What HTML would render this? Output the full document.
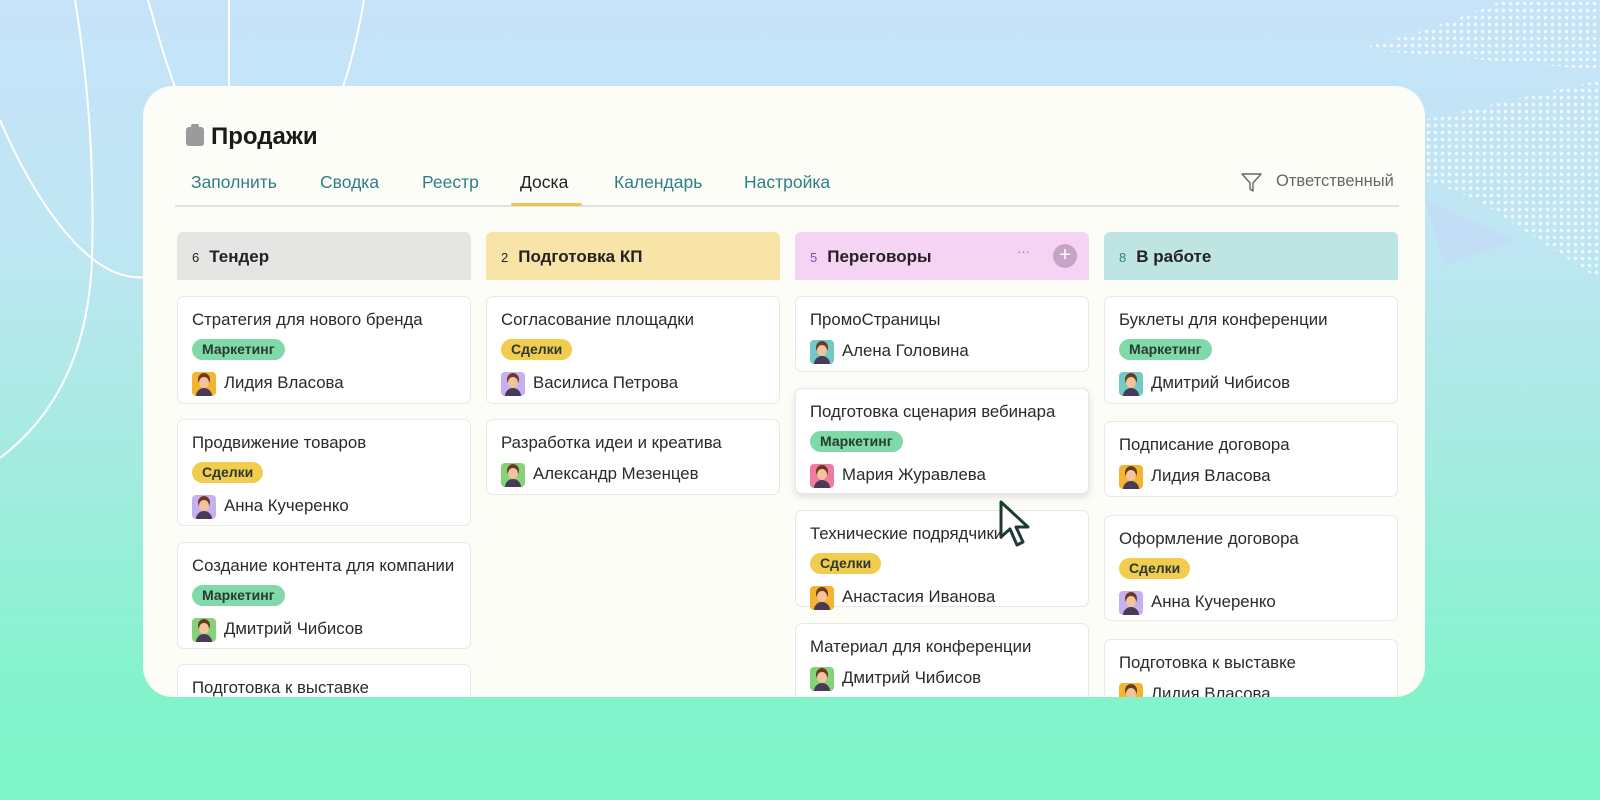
<!DOCTYPE html>
<html><head><meta charset="utf-8"><style>
*{margin:0;padding:0;box-sizing:border-box}
body{width:1600px;height:800px;overflow:hidden;position:relative;font-family:"Liberation Sans","DejaVu Sans",sans-serif;
background:linear-gradient(180deg,#c6e3f9 0%,#bfe6f3 30%,#a2ecdf 60%,#84f3cd 85%,#7ef4c9 100%)}
.panel{position:absolute;left:143px;top:86px;width:1282px;height:611px;background:#fdfdf8;border-radius:30px;overflow:hidden}
.title{position:absolute;left:41px;top:37px;font-size:24px;font-weight:bold;color:#1a1a1a}
.clip{position:absolute;left:43px;top:41px;width:18px;height:19px;background:#9b9b9b;border-radius:3px}
.clip:before{content:"";position:absolute;left:5px;top:-3px;width:8px;height:5px;background:#9b9b9b;border-radius:2px}
.tab{position:absolute;top:86px;font-size:17.5px;color:#2f7f86}
.line{position:absolute;left:32px;top:119px;width:1224px;height:2px;background:#e2e2e0}
.ul{position:absolute;left:368px;top:117px;width:71px;height:3px;background:#f0c450;border-radius:2px}
.hd{position:absolute;top:146px;width:294px;height:48px;border-radius:6px 6px 0 0;font-size:17px;font-weight:bold;color:#222;padding:15px 0 0 15px}
.hd span{font-size:13px;font-weight:normal;margin-right:10px}
.card{position:absolute;width:294px;background:#fff;border:1px solid #e8e8e4;border-radius:7px;padding:14px 0 0 14px;font-size:16.8px;color:#2a2a2a}
.t{height:28px;line-height:18px}
.tag{display:inline-block;height:21px;line-height:21px;padding:0 10px;border-radius:11px;font-size:14px;font-weight:bold;color:#2a3a30;margin-bottom:11px;margin-top:-6px}
.m{background:#7fd9a8}.s{background:#f2cc4e}
.p{height:24px;line-height:24px}
.av{display:inline-block;width:24px;height:24px;border-radius:4px;vertical-align:middle;margin-right:8px;position:relative;overflow:hidden}
.av:after{content:"";position:absolute;left:7px;top:5px;width:10px;height:11px;border-radius:50%;background:#f3c39b;box-shadow:0 -3px 0 1px #6b3a22}
.av:before{content:"";position:absolute;left:4px;top:16px;width:16px;height:10px;border-radius:8px 8px 0 0;background:#4a3a5a}
.y{background:#f3b42f}.v{background:#c6b0f0}.g{background:#86d27a}.tq{background:#73c9c3}.pk{background:#f07aa0}
.dots{position:absolute;background-image:radial-gradient(circle,rgba(255,255,255,.75) 1.6px,transparent 2px);background-size:7px 7px}
</style></head><body>
<svg style="position:absolute;left:0;top:0" width="420" height="470"><path d="M75 0 C85 60 95 150 92 260 C88 360 50 420 0 458" fill="none" stroke="#fff" stroke-width="2"/><path d="M0 120 C30 190 70 250 110 270 C125 277 135 278 146 277" fill="none" stroke="#fff" stroke-width="2"/><path d="M148 0 C158 35 165 60 175 87" fill="none" stroke="#fff" stroke-width="2"/><path d="M229 0 L229 87" fill="none" stroke="#fff" stroke-width="2"/><path d="M364 0 C358 35 352 60 343 87" fill="none" stroke="#fff" stroke-width="2"/></svg>
<div class="dots" style="left:1360px;top:0;width:240px;height:70px;clip-path:polygon(30% 40%,60% 0,100% 0,100% 100%,0 70%)"></div>
<div class="dots" style="left:1425px;top:80px;width:175px;height:200px;clip-path:polygon(0 20%,100% 0,100% 100%,30% 60%,0 50%)"></div>
<svg style="position:absolute;left:1425px;top:200px" width="175" height="120"><polygon points="0,0 90,40 20,65" fill="#c4d8f6" opacity=".7"/></svg>
<div class="panel">
<div class="clip"></div><div class="title" style="left:68px">Продажи</div>
<div class="tab" style="left:48px">Заполнить</div>
<div class="tab" style="left:177px">Сводка</div>
<div class="tab" style="left:279px">Реестр</div>
<div class="tab" style="left:377px;color:#222">Доска</div>
<div class="tab" style="left:471px">Календарь</div>
<div class="tab" style="left:601px">Настройка</div>
<svg style="position:absolute;left:1097px;top:85px" width="24" height="24"><path d="M2 3 H21 L13 12 V20 L10 18 V12 Z" fill="none" stroke="#666" stroke-width="1.4" stroke-linejoin="round"/></svg>
<div class="tab" style="left:1133px;color:#666;font-size:16.5px">Ответственный</div>
<div class="line"></div><div class="ul"></div>

<div class="hd" style="left:34px;background:#e5e5e3"><span>6</span>Тендер</div>
<div class="hd" style="left:343px;background:#f8e4a6"><span>2</span>Подготовка КП</div>
<div class="hd" style="left:652px;background:#f5d3f3"><span style="color:#8a4a9a">5</span>Переговоры
<span style="position:absolute;left:222px;top:12px;color:#888">···</span>
<span style="position:absolute;left:258px;top:12px;width:24px;height:24px;border-radius:50%;background:#c7a3c9;color:#fff;text-align:center;line-height:23px;font-size:20px">+</span></div>
<div class="hd" style="left:961px;background:#bfe5e2"><span style="color:#3a7f7a">8</span>В работе</div>

<div class="card" style="left:34px;top:210px;height:108px"><div class="t">Стратегия для нового бренда</div><div class="tag m">Маркетинг</div><div class="p"><i class="av y"></i>Лидия Власова</div></div>
<div class="card" style="left:34px;top:333px;height:107px"><div class="t">Продвижение товаров</div><div class="tag s">Сделки</div><div class="p"><i class="av v"></i>Анна Кучеренко</div></div>
<div class="card" style="left:34px;top:456px;height:107px"><div class="t">Создание контента для компании</div><div class="tag m">Маркетинг</div><div class="p"><i class="av g"></i>Дмитрий Чибисов</div></div>
<div class="card" style="left:34px;top:578px;height:80px"><div class="t">Подготовка к выставке</div></div>

<div class="card" style="left:343px;top:210px;height:108px"><div class="t">Согласование площадки</div><div class="tag s">Сделки</div><div class="p"><i class="av v"></i>Василиса Петрова</div></div>
<div class="card" style="left:343px;top:333px;height:76px"><div class="t">Разработка идеи и креатива</div><div class="p"><i class="av g"></i>Александр Мезенцев</div></div>

<div class="card" style="left:652px;top:210px;height:76px"><div class="t">ПромоСтраницы</div><div class="p"><i class="av tq"></i>Алена Головина</div></div>
<div class="card" style="left:652px;top:302px;height:106px;box-shadow:0 3px 8px rgba(0,0,0,.12)"><div class="t">Подготовка сценария вебинара</div><div class="tag m">Маркетинг</div><div class="p"><i class="av pk"></i>Мария Журавлева</div></div>
<div class="card" style="left:652px;top:424px;height:97px"><div class="t">Технические подрядчики</div><div class="tag s">Сделки</div><div class="p"><i class="av y"></i>Анастасия Иванова</div></div>
<div class="card" style="left:652px;top:537px;height:80px"><div class="t">Материал для конференции</div><div class="p"><i class="av g"></i>Дмитрий Чибисов</div></div>

<div class="card" style="left:961px;top:210px;height:108px"><div class="t">Буклеты для конференции</div><div class="tag m">Маркетинг</div><div class="p"><i class="av tq"></i>Дмитрий Чибисов</div></div>
<div class="card" style="left:961px;top:335px;height:76px"><div class="t">Подписание договора</div><div class="p"><i class="av y"></i>Лидия Власова</div></div>
<div class="card" style="left:961px;top:429px;height:106px"><div class="t">Оформление договора</div><div class="tag s">Сделки</div><div class="p"><i class="av v"></i>Анна Кучеренко</div></div>
<div class="card" style="left:961px;top:553px;height:80px"><div class="t">Подготовка к выставке</div><div class="p"><i class="av y"></i>Лидия Власова</div></div>

<svg style="position:absolute;left:853px;top:413px" width="40" height="50"><path d="M5 3 L5 38 L14 30 L21 46 L27 43 L20 28 L32 28 Z" fill="#fff" stroke="#1d3b36" stroke-width="3" stroke-linejoin="round"/></svg>
</div>
</body></html>
